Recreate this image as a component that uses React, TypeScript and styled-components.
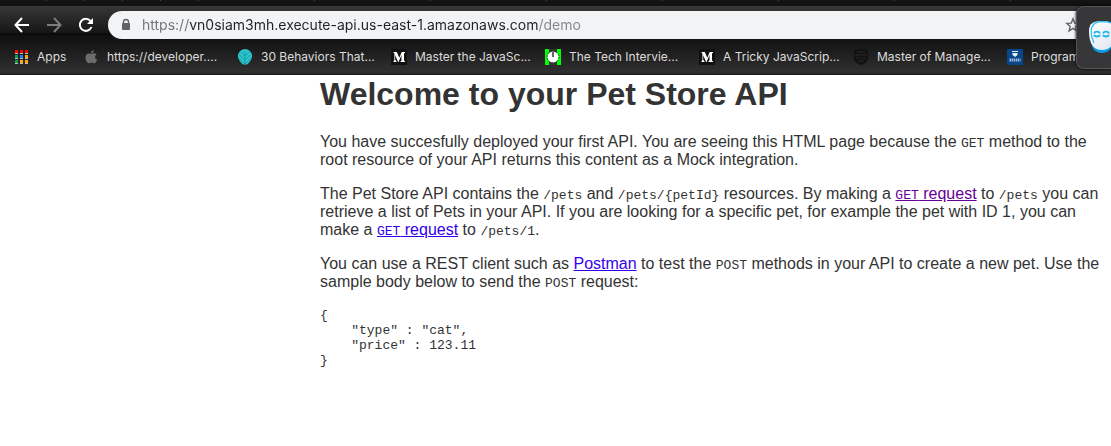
import React from 'react';
import styled, { createGlobalStyle } from 'styled-components';

const GlobalStyle = createGlobalStyle`
  *, *::before, *::after { box-sizing: border-box; }
  body {
    margin: 0;
    background: #fff;
    color: #333;
    font-family: "Liberation Sans", Helvetica, Arial, sans-serif;
    font-size: 16px;
    line-height: 18px;
    overflow-x: hidden;
  }
`;

const Browser = styled.header`
  position: relative;
  overflow: hidden;
  height: 75px;
  background: linear-gradient(
    #141414 0, #111 6px,
    #424242 6px, #363636 7px, #161616 33px,
    #050505 34px, #0f0f0f 35px, #303030 73px,
    #1a1a1a 74px, #1a1a1a 75px
  );
`;

const TabStrip = styled.div`
  display: flex;
  height: 6px;
  padding-left: 9px;
`;

const TabEdge = styled.span<{ $pinned?: boolean }>`
  flex: 0 0 ${p => (p.$pinned ? 38 : 116)}px;
  height: 1px;
  border-right: 1px solid #444;
`;

const Toolbar = styled.div`
  display: flex;
  align-items: center;
  height: 38px;
  padding-left: 12px;
`;

const ToolButton = styled.button<{ $dim?: boolean }>`
  display: grid;
  place-items: center;
  width: 20px;
  height: 20px;
  margin-right: 12px;
  padding: 0;
  border: 0;
  background: none;
  color: ${p => (p.$dim ? '#7c7c7c' : '#fff')};
`;

const Omnibox = styled.label`
  display: flex;
  align-items: center;
  flex: 1;
  height: 28px;
  padding: 0 30px 0 12px;
  border-radius: 14px 0 0 14px;
  background: #f1f3f4;
`;

const Address = styled.input`
  flex: 1;
  min-width: 0;
  height: 28px;
  margin-left: 10px;
  padding: 0;
  border: 0;
  outline: 0;
  color: transparent;
  background: linear-gradient(90deg, #6e7276 47px, #202124 47px, #202124 397px, #80868b 397px);
  -webkit-background-clip: text;
  background-clip: text;
  font: 14px/28px Inter, sans-serif;
`;

const StarButton = styled.button`
  width: 16px;
  height: 16px;
  padding: 0;
  border: 0;
  background: none;
  color: #5f6368;
`;

const Bookmarks = styled.nav`
  display: flex;
  height: 26px;
  padding-left: 13px;
`;

const Bookmark = styled.a<{ $short?: boolean }>`
  display: flex;
  align-items: center;
  gap: 8px;
  flex: 0 0 ${p => (p.$short ? 70 : 154)}px;
  color: #dcdcdc;
  font-size: 12px;
  font-family: Inter, sans-serif;
  text-decoration: none;
  white-space: nowrap;
  svg { flex: none; }
`;

const Assistant = styled.aside`
  position: absolute;
  top: 6px;
  right: 0;
  width: 35px;
  height: 63px;
  overflow: hidden;
  border: 1px solid #555;
  border-right: 0;
  border-radius: 8px 0 0 8px;
  background: #373638;
  box-shadow: 0 0 3px #000;
`;

const Page = styled.main`
  max-width: 1120px;
  padding-left: 320px;
`;

const Title = styled.h1`
  margin: 0;
  font-size: 32px;
  line-height: 38px;
`;

const Paragraph = styled.p`
  margin: 0;
  padding-top: 16px;
  ${Title} + & { padding-top: 20px; }
`;

const Code = styled.code`
  font-family: "Liberation Mono", Courier, monospace;
  font-size: 13px;
  line-height: 15px;
`;

const Sample = styled.pre`
  margin: 17px 0 0;
  font-family: "Liberation Mono", Courier, monospace;
  font-size: 13px;
  line-height: 15px;
`;

const PageLink = styled.a<{ $visited?: boolean }>`
  color: ${p => (p.$visited ? '#609' : '#30e')};
  text-decoration: underline;
`;

const AppsIcon = () => (
  <svg width="16" height="16" viewBox="0 0 16 16">
    {['#f00', '#f00', '#f00', '#0a9d58', '#1a80f8', '#fa0', '#0a9d58', '#fa0', '#fa0'].map((c, i) => (
      <g key={i}>
        <rect x={2 + (i % 3) * 5} y={1 + Math.floor(i / 3) * 5} width="3" height="4" fill="#bbb" />
        <rect x={2 + (i % 3) * 5} y={1 + Math.floor(i / 3) * 5} width="3" height="3" fill={c} />
      </g>
    ))}
  </svg>
);

const AppleIcon = () => (
  <svg width="16" height="16" viewBox="0 0 16 16" fill="#6c6c6c">
    <path d="M10.900 1.200c.1 1.700-1.400 3.100-3 3C7.800 2.600 9.300 1.300 10.900 1.200z" />
    <path d="M8.200 5c.6 0 1.600-.8 2.900-.7 1.100.1 2 .5 2.500 1.300-2.200 1.300-1.900 4.400.5 5.300-.5 1.400-1.700 3.400-2.900 3.400-1 0-1.400-.6-2.600-.6s-1.600.6-2.600.6C4.300 14.300 2.500 11.300 2.500 8.700 2.500 6 4.100 4.500 5.800 4.500c1.100 0 1.800.5 2.400.5z" />
  </svg>
);

const LeafIcon = () => (
  <svg width="16" height="16" viewBox="0 0 16 16">
    <path d="M8 0c3 .3 6.500 2.500 7 6 .4 4-2.600 7.500-5 9.500H6C3.600 13.500.600 10 1 6 1.500 2.500 5 .300 8 0z" fill="#2cc5ce" />
    <path d="M8 2v14M8 7L4 3M8 7l4-4M8 11L2 5.500M8 11l6-5.500M8 15L2 9.500M8 15l6-5.500" stroke="#178d98" strokeWidth=".7" fill="none" />
  </svg>
);

const MediumIcon = () => (
  <svg width="16" height="16" viewBox="0 0 16 16">
    <rect width="16" height="16" fill="#111" />
    <path d="M2.500 3h3.300l2.500 5.700L10.700 3H14v.7l-1 .7v7l1 .8v.8H9.500v-.8l1-.8V6L7.600 13h-.5L4.200 6.200v4.500l1.300 1.500v.8h-3v-.8l.9-1.200V4.400l-.9-.7z" fill="#fff" />
  </svg>
);

const ClockIcon = () => (
  <svg width="16" height="16" viewBox="0 0 16 16">
    <rect width="16" height="16" fill="#0f0" />
    <path d="M4 0h8v16H4z" fill="#333" />
    <circle cx="8" cy="8" r="5.500" fill="#fff" />
    <circle cx="8" cy="8" r="6" fill="none" stroke="#333" strokeWidth="1" strokeDasharray="1.500 1.600" />
    <path d="M8 3v5" stroke="#333" strokeWidth="1.500" />
  </svg>
);

const ShieldIcon = () => (
  <svg width="16" height="16" viewBox="0 0 16 16">
    <path d="M1 1l7-1 7 1v8c0 3-3.500 6-7 7-3.500-1-7-4-7-7z" fill="#111" />
    <path d="M4 3h8M2 6h12M3 9h3M7 9h2M10 9h3M5 12h6" stroke="#2b2b2b" strokeWidth="1" />
  </svg>
);

const SchoolIcon = () => (
  <svg width="16" height="16" viewBox="0 0 16 16">
    <rect width="16" height="16" rx="1" fill="#08468b" />
    <path d="M5 2h6v1H5zM5.500 4h5v2L8 8 5.500 6z" fill="#e3ebf3" />
    <path d="M2.500 11h11" stroke="#9fb9d5" strokeWidth="3" strokeDasharray="1.500 .6" />
  </svg>
);

const RobotIcon = () => (
  <svg width="34" height="61" viewBox="0 0 34 61">
    <defs>
      <linearGradient id="face" x1="0" y1="0" x2="1" y2="1">
        <stop offset="0" stopColor="#fff" />
        <stop offset="1" stopColor="#dfe5f0" />
      </linearGradient>
    </defs>
    <path d="M14 32c0 9 4 14 11 14s11-5 11-14z" fill="#0a9bea" />
    <path d="M25 14c8 0 13 2 13 10 0 12-4 19-13 19S12 36 12 24c0-8 5-10 13-10z" fill="url(#face)" />
    <path d="M34 16c-5-2-14-2-17 1-4 4-3 12 0 19" fill="none" stroke="#25bdf5" strokeWidth="1.200" />
    <g fill="none" stroke="#19b6ee" strokeWidth="1.800">
      <path d="M17 26.500c1-2.500 5-2.500 6 0M17 28c1 2 5 2 6 0M26 26.500c1-2.500 5-2.500 6 0M26 28c1 2 5 2 6 0" />
    </g>
  </svg>
);

const bookmarks = [
  { label: 'https://developer....', Icon: AppleIcon },
  { label: '30 Behaviors That...', Icon: LeafIcon },
  { label: 'Master the JavaSc...', Icon: MediumIcon },
  { label: 'The Tech Intervie...', Icon: ClockIcon },
  { label: 'A Tricky JavaScrip...', Icon: MediumIcon },
  { label: 'Master of Manage...', Icon: ShieldIcon },
  { label: 'Programming', Icon: SchoolIcon },
];

const sampleBody = `{
    "type" : "cat",
    "price" : 123.11
}`;

export default function App() {
  return (
    <>
      <GlobalStyle />
      <Browser>
        <TabStrip>
          {Array.from({ length: 12 }, (_, i) => <TabEdge key={i} $pinned={i < 5} />)}
        </TabStrip>
        <Toolbar>
          <ToolButton aria-label="Back">
            <svg width="16" height="16" viewBox="0 0 16 16" fill="none" stroke="currentColor" strokeWidth="2">
              <path d="M15 8H2M8 1L1.500 8 8 15" />
            </svg>
          </ToolButton>
          <ToolButton aria-label="Forward" $dim>
            <svg width="16" height="16" viewBox="0 0 16 16" fill="none" stroke="currentColor" strokeWidth="2">
              <path d="M1 8h13M8 1l6.500 7L8 15" />
            </svg>
          </ToolButton>
          <ToolButton aria-label="Reload">
            <svg width="16" height="16" viewBox="0 0 16 16" fill="none" stroke="currentColor" strokeWidth="2">
              <path d="M13.500 10A6 6 0 1 1 12.500 4" />
              <path d="M15 1v6H9z" fill="currentColor" stroke="none" />
            </svg>
          </ToolButton>
          <Omnibox>
            <svg width="12" height="14" viewBox="0 0 12 14">
              <rect x="2" y="5" width="8" height="7" rx="1" fill="#5f6368" />
              <path d="M3.500 6V4a2.500 2.500 0 0 1 5 0v2" fill="none" stroke="#5f6368" strokeWidth="1.300" />
            </svg>
            <Address aria-label="Address" readOnly value="https://vn0siam3mh.execute-api.us-east-1.amazonaws.com/demo" />
            <StarButton aria-label="Bookmark this page">
              <svg width="16" height="16" viewBox="0 0 16 16" fill="none" stroke="currentColor" strokeWidth="1.400">
                <path d="M8 1.800l1.700 4.300 4.600.3-3.500 3 1.100 4.500L8 11.400l-3.900 2.500 1.100-4.500-3.500-3 4.600-.3z" />
              </svg>
            </StarButton>
          </Omnibox>
        </Toolbar>
        <Bookmarks>
          <Bookmark href="#apps" $short><AppsIcon />Apps</Bookmark>
          {bookmarks.map(({ label, Icon }) => (
            <Bookmark key={label} href="#bookmark"><Icon />{label}</Bookmark>
          ))}
        </Bookmarks>
        <Assistant aria-label="Assistant"><RobotIcon /></Assistant>
      </Browser>
      <Page>
        <Title>Welcome to your Pet Store API</Title>
        <Paragraph>
          You have succesfully deployed your first API. You are seeing this HTML page because
          the <Code>GET</Code> method to the root resource of your API returns this content as a Mock integration.
        </Paragraph>
        <Paragraph>
          The Pet Store API contains the <Code>/pets</Code> and <Code>/pets/{'{petId}'}</Code> resources. By
          making a <PageLink href="#pets" $visited><Code>GET</Code> request</PageLink> to <Code>/pets</Code> you
          can retrieve a list of Pets in your API. If you are looking for a specific pet, for example the pet
          with ID 1, you can make a <PageLink href="#pet"><Code>GET</Code> request</PageLink> to <Code>/pets/1</Code>.
        </Paragraph>
        <Paragraph>
          You can use a REST client such as <PageLink href="#postman">Postman</PageLink> to test
          the <Code>POST</Code> methods in your API to create a new pet. Use the sample body below to send
          the <Code>POST</Code> request:
        </Paragraph>
        <Sample>{sampleBody}</Sample>
      </Page>
    </>
  );
}
